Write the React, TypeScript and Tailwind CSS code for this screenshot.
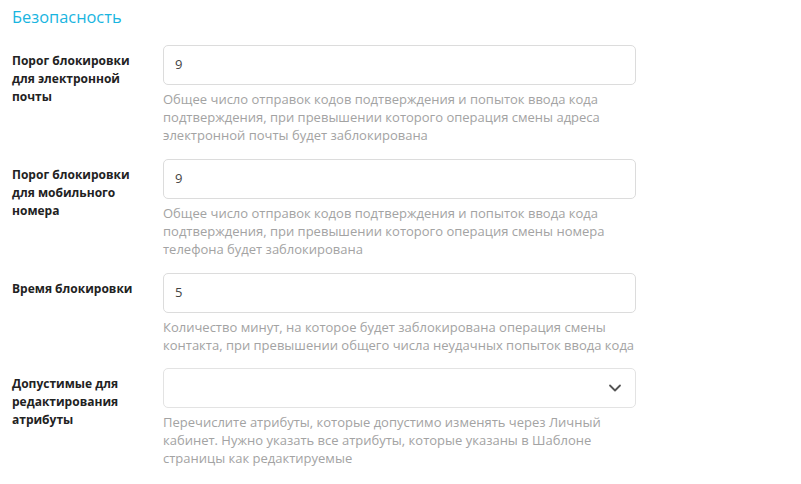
import React from "react";

const rows = [
  {
    label: "Порог блокировки для электронной почты",
    value: "9",
    help: "Общее число отправок кодов подтверждения и попыток ввода кода подтверждения, при превышении которого операция смены адреса электронной почты будет заблокирована",
  },
  {
    label: "Порог блокировки для мобильного номера",
    value: "9",
    help: "Общее число отправок кодов подтверждения и попыток ввода кода подтверждения, при превышении которого операция смены номера телефона будет заблокирована",
  },
  {
    label: "Время блокировки",
    value: "5",
    help: "Количество минут, на которое будет заблокирована операция смены контакта, при превышении общего числа неудачных попыток ввода кода",
  },
];

export default function App() {
  return (
    <div
      className="w-[801px] h-[484px] bg-white overflow-hidden pl-[12px] pt-[5px]"
      style={{ fontFamily: '"Open Sans", sans-serif' }}
    >
      <h2 className="text-[16.4px] leading-[24px] text-[#19b5df] font-normal">Безопасность</h2>
      <div className="mt-[16px] flex flex-col">
        {rows.map((r, i) => (
          <div key={i} className="flex mb-[15px]">
            <div className="w-[151px] shrink-0 pt-[7px] pr-[14px] text-[12px] leading-[18px] font-bold text-[#222]">
              {r.label}
            </div>
            <div className="w-[473px]">
              <div className="h-[40px] rounded-[5px] border border-[#dcdcdc] flex items-center px-[11px] text-[13px] text-[#444]">
                {r.value}
              </div>
              <p className="mt-[5px] text-[13px] leading-[18px] text-[#a3a3a3]">{r.help}</p>
            </div>
          </div>
        ))}
        <div className="flex -mt-[1px]">
          <div className="w-[151px] shrink-0 pt-[7px] pr-[14px] text-[12px] leading-[18px] font-bold text-[#222]">
            Допустимые для редактирования атрибуты
          </div>
          <div className="w-[473px]">
            <div className="h-[40px] rounded-[5px] border border-[#e3e3e3] flex items-center justify-end pr-[13px]">
              <svg width="14" height="14" viewBox="0 0 14 14" fill="none">
                <path d="M2 4.5 L7 9.5 L12 4.5" stroke="#555" strokeWidth="1.8" strokeLinecap="round" strokeLinejoin="round" />
              </svg>
            </div>
            <p className="mt-[5px] text-[13px] leading-[18px] text-[#a3a3a3]">
              Перечислите атрибуты, которые допустимо изменять через Личный кабинет. Нужно указать все атрибуты, которые указаны в Шаблоне страницы как редактируемые
            </p>
          </div>
        </div>
      </div>
    </div>
  );
}
